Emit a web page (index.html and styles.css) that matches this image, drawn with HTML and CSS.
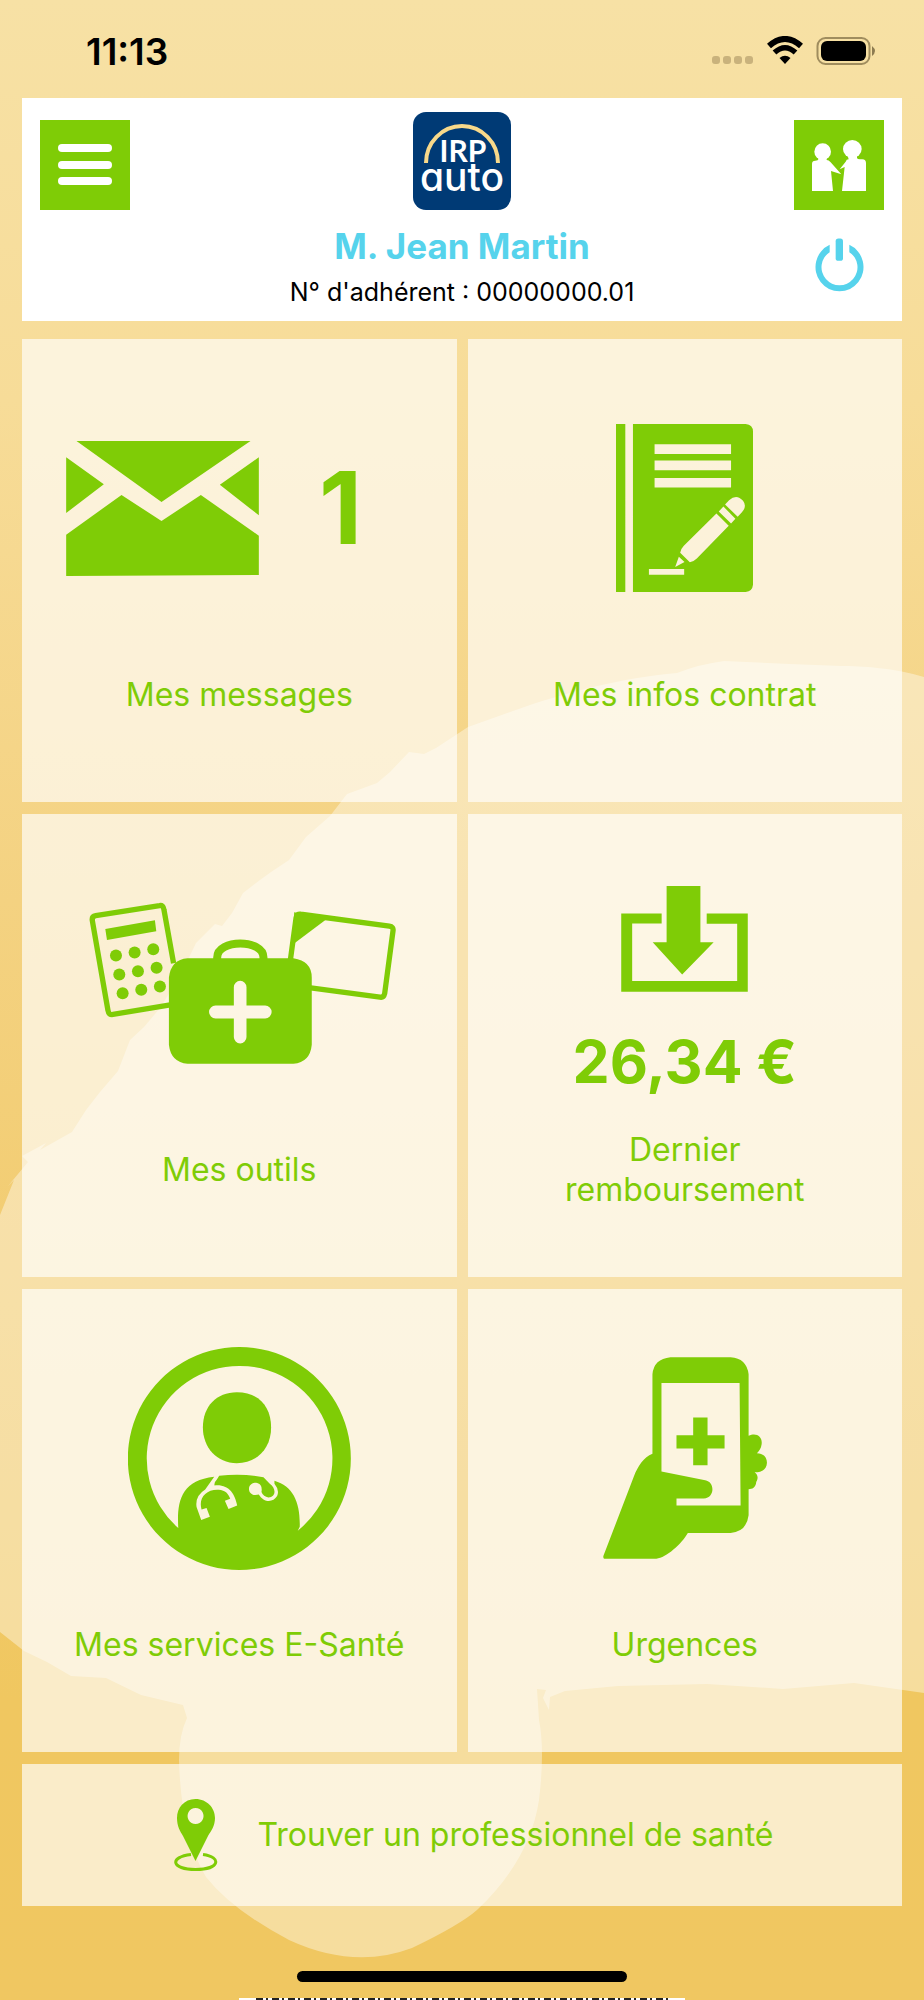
FILE: index.html
```
<!DOCTYPE html>
<html lang="fr">
<head>
  <meta charset="UTF-8">
  <meta name="viewport" content="width=device-width, initial-scale=1.0">
  <title>IRP auto - Accueil</title>
  <link rel="stylesheet" href="styles.css">
</head>
<body>
  <svg class="backdrop" viewBox="0 0 924 2000" preserveAspectRatio="none" aria-hidden="true">
    <path d="M924 677 C896 668 860 666 842 666 L790 664 L724 661 Q700 664 677 673 C620 678 570 692 530 705 L468 727 L436 748 L424 754 L409 752 L390 772 L377 783 L347 794 L330 816 L306 837 L289 860 L271 872 L260 880 L243 893 L232 913 L222 926 L215 924 L196 943 L180 976 L160 1008 L144 1027 L130 1040 L118 1071 L100 1092 L86 1110 L72 1132 L40 1150 L46 1143 L22 1156 L28 1162 L8 1186 L14 1180 L0 1215 L0 1632 L24 1651 L47 1662 L71 1676 L106 1678 L141 1695 L183 1705 L187 1718 Q179 1735 179 1760 Q181 1835 206 1877 Q232 1910 289 1940 Q354 1970 412 1948 Q460 1925 477 1910 Q530 1860 539 1800 Q545 1750 539 1720 L537 1689 L546 1690 L543 1698 L549 1710 L550 1697 L565 1691 L618 1686 L707 1684 L783 1689 L854 1683 L924 1693 Z"/>
  </svg>

  <div class="status-bar">
    <span class="time">11:13</span>
    <svg width="164" height="30" viewBox="0 0 164 30" aria-hidden="true">
      <g fill="#c9b27c">
        <rect x="0" y="20" width="8" height="8" rx="3"/>
        <rect x="11" y="20" width="8" height="8" rx="3"/>
        <rect x="22" y="20" width="8" height="8" rx="3"/>
        <rect x="33" y="20" width="8" height="8" rx="3"/>
      </g>
      <g fill="none" stroke="#000">
        <path d="M57 10 Q73 -4 89 10" stroke-width="6"/>
        <path d="M62.500 16.500 Q73 7 83.500 16.500" stroke-width="5.500"/>
      </g>
      <path d="M67.500 22 Q73 17.500 78.500 22 L73 28 Z"/>
      <rect x="105.500" y="2" width="52" height="26" rx="8" fill="none" stroke="#a08d5e" stroke-width="2"/>
      <rect x="109" y="5" width="45" height="20" rx="6"/>
      <path d="M160 10 Q166 15 160 20 Z" fill="#8d7b50"/>
    </svg>
  </div>

  <header class="header">
    <button class="square-btn" type="button" aria-label="Menu">
      <svg width="54" height="42" viewBox="0 0 54 42" fill="#fff">
        <rect width="54" height="8" rx="4"/>
        <rect y="17" width="54" height="8" rx="4"/>
        <rect y="33" width="54" height="8" rx="4"/>
      </svg>
    </button>
    <svg class="logo" viewBox="0 0 98 98" role="img" aria-label="IRP auto">
      <rect width="98" height="98" rx="13" fill="#003a75"/>
      <path d="M13 51 A36 37 0 0 1 85 51" fill="none" stroke="#f8d98a" stroke-width="4"/>
      <text class="logo-top" x="50" y="50">IRP</text>
      <text class="logo-bottom" x="49" y="79">auto</text>
    </svg>
    <button class="square-btn" type="button" aria-label="Bénéficiaires">
      <svg width="54" height="51" viewBox="96 89 162 153" fill="#fff">
        <circle cx="128" cy="124" r="25"/>
        <path d="M115 140 H140 V149 Q146 149 152 156 L184 192 L153 182 L159 242 H96 V160 Q96 151 106 151 Q115 151 115 147 Z"/>
        <ellipse cx="217" cy="116" rx="28" ry="27"/>
        <path d="M203 136 H231 V143 Q232 147 240 147 H247 Q258 148 258 158 V242 H186 L194 170 L179 177 L197 154 Q199 147 206 147 Z"/>
      </svg>
    </button>

    <div class="member">
      <h1>M. Jean Martin</h1>
      <p>N° d'adhérent : 00000000.01</p>
    </div>
    <button class="power-btn" type="button" aria-label="Déconnexion">
      <svg width="49" height="54" viewBox="104 386 147 161">
        <path d="M148 406 A72 73 0 1 0 207 406 V428 A54 54 0 1 1 148 428 Z" fill="#56d3ec"/>
        <rect x="166" y="387" width="22" height="67" rx="8" fill="#56d3ec"/>
      </svg>
    </button>
  </header>

  <main class="tiles">
    <a class="tile" href="#messages">
      <span class="visual messages">
        <svg width="193" height="135" viewBox="77 123 578 405">
          <path d="M108 123 H630 L363 306 Z M77 172 L190 253 L77 339 Z M655 172 V346 L538 254 Z M77 404 L243 285 L363 363 L481 285 L655 407 V525 L77 528 Z"/>
        </svg>
        <span class="count">1</span>
      </span>
      <span class="label">Mes messages</span>
    </a>

    <a class="tile" href="#contrat">
      <span class="visual">
        <svg width="137" height="168" viewBox="80 77 412 505">
          <path fill-rule="evenodd" d="M80 77 H108 V582 H80 Z M131 77 H470 Q492 79 492 100 V560 Q490 580 470 582 H131 Z M196 138 V167 H426 V138 Z M196 187 V216 H426 V187 Z M196 239 V268 H426 V239 Z M179 513 V530 H285 V513 Z M258 507 L286 492 L269 476 Z M273 464 L302 493 Q315 489 323 481 L419 383 L382 346 L284 443 Q275 452 273 464 Z M389 340 L426 376 L439 362 L403 325 Z M408 319 L446 356 L458 343 Q475 325 462 308 Q443 286 420 306 Z"/>
        </svg>
      </span>
      <span class="label">Mes infos contrat</span>
    </a>

    <a class="tile" href="#outils">
      <span class="visual tools">
        <svg width="307" height="162" viewBox="56 62 922 485">
          <g fill="none" stroke="#7fcc06" stroke-width="16" stroke-linejoin="round">
            <path d="M310 245 L281 84 Q279 70 268 72 L76 102 Q64 104 66 117 L113 387 Q115 401 128 399 L300 370"/>
            <path d="M661 234 L678 108 Q680 96 692 98 L958 134 Q971 136 969 148 L944 336 Q941 349 930 347 L722 319"/>
          </g>
          <path d="M105 142 L254 116 L258 149 L110 175 Z"/>
          <circle cx="137" cy="222" r="18"/><circle cx="193" cy="213" r="18"/><circle cx="249" cy="203" r="18"/>
          <circle cx="147" cy="279" r="18"/><circle cx="203" cy="269" r="18"/><circle cx="259" cy="259" r="18"/>
          <circle cx="157" cy="335" r="18"/><circle cx="213" cy="325" r="18"/><circle cx="269" cy="315" r="18"/>
          <path d="M672 92 L770 112 L674 184 Z"/>
          <path d="M441 240 V228 C441 172 580 172 580 228 V240" fill="none" stroke="#7fcc06" stroke-width="24"/>
          <path fill-rule="evenodd" d="M352 230 H670 Q725 238 725 288 V490 Q720 543 670 547 H352 Q302 543 296 490 V288 Q302 234 352 230 Z M491 317 V372 H436 A19 19 0 0 0 436 411 H491 V467 A19 19 0 0 0 529 467 V411 H585 A19 19 0 0 0 585 372 H529 V317 A19 19 0 0 0 491 317 Z"/>
        </svg>
      </span>
      <span class="label">Mes outils</span>
    </a>

    <a class="tile" href="#remboursement">
      <span class="visual refund">
        <svg width="127" height="106" viewBox="183 76 382 320">
          <path d="M183 159 H305 V189 H216 V363 H533 V190 H441 V159 H565 V395 H183 Z M320 76 H422 V246 H462 L367 343 L278 246 H320 Z"/>
        </svg>
        <strong class="amount">26,34 €</strong>
      </span>
      <span class="label">Dernier<br>remboursement</span>
    </a>

    <a class="tile" href="#e-sante">
      <span class="visual">
        <svg width="223" height="223" viewBox="54 50 670 670">
          <path fill-rule="evenodd" d="M389 50 A335 335 0 1 1 388 50 Z M389 107 A278 278 0 0 0 205 594 C201 518 211 451 313 440 L286 478 Q255 497 260 531 L274 570 L300 560 L290 534 L275 538 C265 505 288 477 326 479 C347 480 356 492 361 506 L345 512 L356 537 L382 526 C375 492 358 462 314 466 Q312 457 321 448 L328 437 Q395 429 461 441 L480 461 C500 475 499 502 476 502 Q461 501 455 486 C459 463 446 458 435 458 C411 461 412 493 436 495 Q443 494 447 493 C463 519 490 518 502 498 Q510 480 494 461 V452 C551 469 572 518 570 590 L564 602 A278 278 0 0 0 389 107 Z"/>
          <path d="M381 186 C447 186 484 229 484 292 C484 355 441 399 381 399 C320 399 279 351 279 292 C279 228 320 186 381 186 Z"/>
        </svg>
      </span>
      <span class="label">Mes services E-Santé</span>
    </a>

    <a class="tile" href="#urgences">
      <span class="visual">
        <svg width="164" height="202" viewBox="68 53 491 605">
          <path fill-rule="evenodd" d="M270 54 H450 Q498 57 504 105 V289 C528 278 546 292 543 314 Q541 329 529 341 C550 341 559 355 559 370 C558 389 546 398 522 398 C534 406 532 419 527 427 C525 446 515 449 504 449 V527 Q498 576 450 580 H322 C303 613 257 654 228 657 H72 Q68 657 69 649 L160 412 C172 380 190 353 216 343 V105 Q220 59 270 54 Z M243 131 V396 L374 422 C404 427 403 475 370 477 H288 V498 H480 L477 131 Z M338 234 H381 V287 H432 V327 H381 V377 H338 V327 H288 V287 H338 Z"/>
        </svg>
      </span>
      <span class="label">Urgences</span>
    </a>

    <a class="tile tile-wide" href="#professionnel">
      <svg width="45" height="72" viewBox="0 0 45 72">
        <path fill-rule="evenodd" d="M22.500 0 C34 0 42 9 42 19 C42 27 38 32 35 37 L22.500 62 L10 37 C7 32 4 27 4 19 C4 9 11 0 22.500 0 Z M22.500 9 A8 8 0 1 0 22.600 9 Z"/>
        <path d="M18 55.500 C-4 58 -2 70.500 22.500 70.500 C47 70.500 49 58 30 55.500" fill="none" stroke="#7fcc06" stroke-width="3"/>
      </svg>
      <span>Trouver un professionnel de santé</span>
    </a>
  </main>

  <div class="home-indicator"></div>
  <div class="bottom-edge"></div>
</body>
</html>
```
FILE: styles.css
```
* { box-sizing: border-box; margin: 0; padding: 0; }

body {
  position: relative;
  font-family: Inter, "Liberation Sans", sans-serif;
  color: #000;
  background: linear-gradient(#f7e1a5 0%, #f7dc98 20%, #f4d281 45%, #f2cc70 65%, #f0c760 85%, #f0c761 100%);
}

/* brush stroke behind the tiles */
.backdrop {
  position: absolute;
  top: 0;
  left: 0;
  width: 100%;
  height: 100%;
  z-index: -1;
  fill: rgba(255, 255, 255, 0.39);
}

.status-bar {
  height: 98px;
  padding: 4px 48px 0 86px;
  display: flex;
  justify-content: space-between;
  align-items: center;
}

.time {
  font-size: 37px;
  font-weight: 600;
}

.header {
  margin: 0 22px 18px;
  padding: 14px 18px 9px;
  display: grid;
  grid-template-columns: 90px 1fr 90px;
  align-items: end;
  justify-items: center;
  background: #fff;
}

button {
  border: none;
  cursor: pointer;
}

.square-btn {
  width: 90px;
  height: 90px;
  display: flex;
  align-items: center;
  justify-content: center;
  background: #7fcc06;
}

.logo {
  width: 98px;
  height: 98px;
}

.logo text {
  fill: #fff;
  text-anchor: middle;
}

.logo-top {
  font-family: Lato, sans-serif;
  font-size: 30px;
  font-weight: 700;
}

.logo-bottom {
  font-size: 39px;
  font-weight: 500;
  font-feature-settings: "cv11";
}

.member {
  grid-column: 2;
  padding-top: 16px;
  text-align: center;
}

.member h1 {
  margin-bottom: 6px;
  font-size: 35px;
  line-height: 40px;
  font-weight: 700;
  color: #56d3ec;
}

.member p {
  font-size: 25px;
  line-height: 40px;
}

.power-btn {
  padding-bottom: 20px;
  display: flex;
  background: none;
}

.tiles {
  margin: 0 22px;
  display: grid;
  grid-template-columns: 1fr 1fr;
  gap: 12px 11px;
}

.tile {
  padding: 22px 0 67px;
  display: flex;
  flex-direction: column;
  background: rgba(255, 255, 255, 0.66);
  color: #7fcc06;
  fill: #7fcc06;
  font-size: 32px;
  line-height: 40px;
  text-align: center;
  text-decoration: none;
}

.visual {
  height: 294px;
  display: flex;
  align-items: center;
  justify-content: center;
}

.label {
  height: 80px;
  display: flex;
  align-items: center;
  justify-content: center;
}

.messages {
  justify-content: flex-start;
  padding-left: 44px;
  gap: 60px;
}

.count {
  font-size: 100px;
  font-weight: 700;
}

.tools {
  padding-left: 6px;
}

.refund {
  flex-direction: column;
  justify-content: flex-start;
  padding-top: 50px;
  gap: 40px;
}

.amount {
  font-size: 59px;
  line-height: 60px;
  font-weight: 700;
}

.tile-wide {
  grid-column: 1 / -1;
  padding: 35px 0 35px 22px;
  flex-direction: row;
  align-items: center;
  justify-content: center;
  gap: 40px;
}

.home-indicator {
  width: 330px;
  height: 11px;
  margin: 65px auto 16px;
  border-radius: 6px;
  background: #000;
}

.bottom-edge {
  width: 446px;
  height: 2px;
  margin: 0 auto;
  background: repeating-linear-gradient(90deg, #222 0 7px, #fff 7px 10px, #222 10px 12px, #fff 12px 16px) center / 412px 2px no-repeat #fff;
}
```
